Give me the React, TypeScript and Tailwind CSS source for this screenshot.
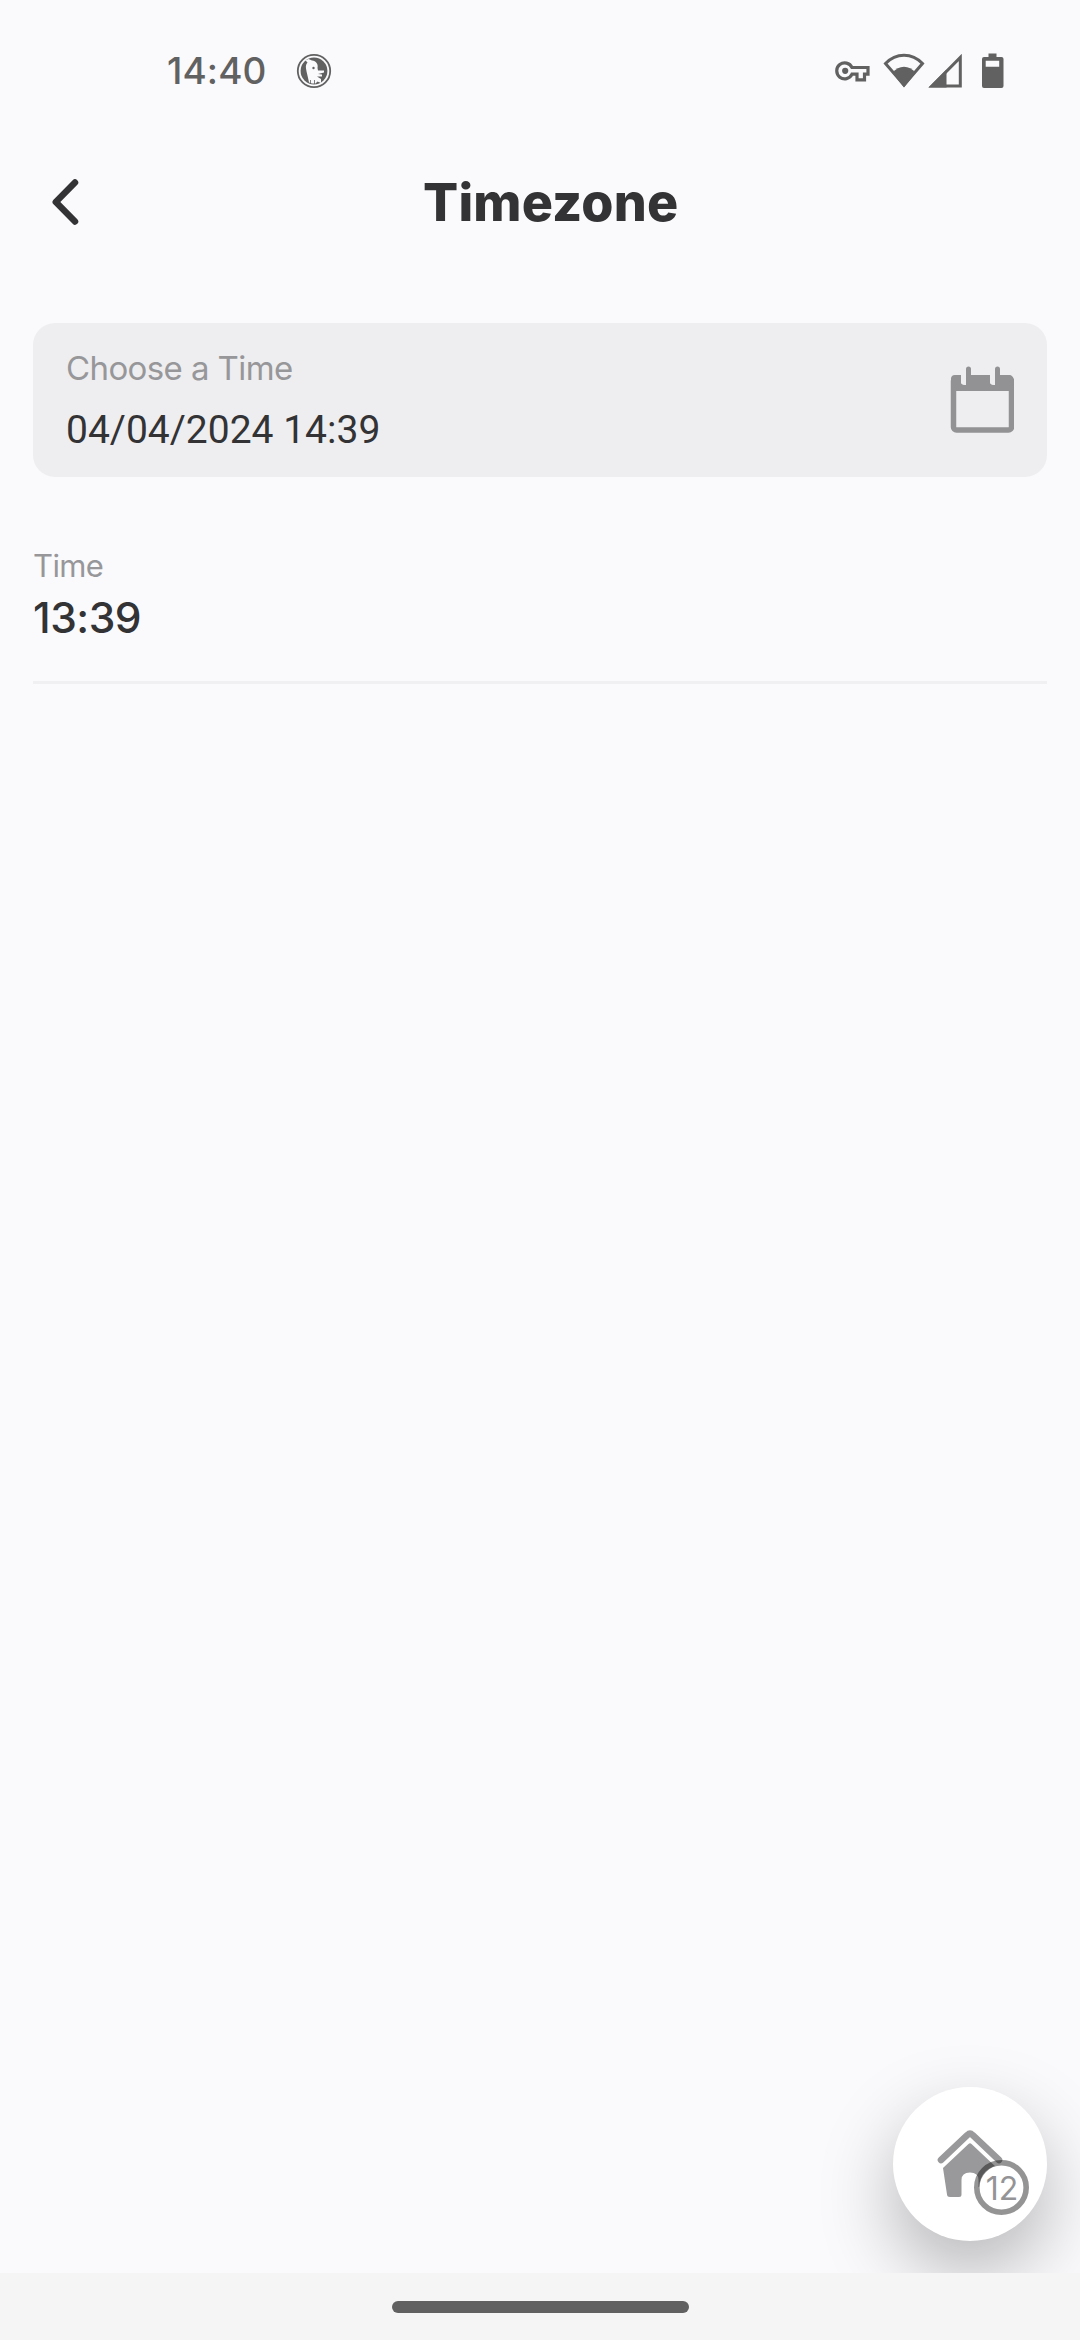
import React from 'react';

const StatusBar: React.FC = () => (
  <div className="flex h-[142px] shrink-0 items-center pl-[167px] text-[#616161]">
    <span className="w-[129px] pb-[2px] text-[37px] font-medium leading-none tracking-[0.1px]">14:40</span>

    {/* DuckDuckGo */}
    <svg className="h-[36px] w-[36px]" viewBox="0 0 36 36" fill="none">
      <circle cx="18" cy="18" r="16.2" stroke="#616161" strokeWidth="1.8" />
      <circle cx="18" cy="18" r="13.4" fill="#616161" />
      <path
        d="M9.5 7.5L12.500 6L16 7.500C20 8 22.500 11 21.500 15L22 17.500L28 17.500V19.500L22 21L26 21.500V23.500L21 23.500L25 26V30L21.500 28.500L19.500 30.500H16L13 29.500C12 24 10.500 19 10 15.500C9.500 12.500 10.500 10.500 11.500 9.500z"
        fill="#fafafd"
      />
      <circle cx="17.500" cy="15" r="1.200" fill="#616161" />
      <path d="M14.500 27V31M18.500 27V31" stroke="#616161" strokeWidth="0.8" />
    </svg>

    <div className="ml-auto flex h-[36px] pr-[76px]">
      {/* VPN key */}
      <svg className="h-[36px] w-[36px]" viewBox="0 0 36 36" fill="none" stroke="#616161" strokeWidth="3.2">
        <path d="M17 14.500a8 8 0 1 0 0 6.700h5v5.600h7.500v-5.600H33v-6.700z" />
        <circle cx="10.200" cy="17.800" r="3.100" fill="#616161" stroke="none" />
      </svg>
      {/* Wifi */}
      <svg className="ml-[12px] h-[36px] w-[42px]" viewBox="0 0 42 36" fill="none">
        <path d="M2.500 10.500C13 -.6 29 -.6 39.500 10.500L21 32z" stroke="#616161" strokeWidth="3" />
        <path d="M9.500 20c6-8.400 17-8.400 23 0L21 34.500z" fill="#616161" />
      </svg>
      {/* Signal */}
      <svg className="ml-[3px] h-[36px] w-[35px]" viewBox="0 0 35 36" fill="none">
        <path d="M4 33L32.300 4.500V33z" stroke="#616161" strokeWidth="3" />
        <path d="M.5 34.600L18.500 16.500v18z" fill="#616161" />
      </svg>
      {/* Battery */}
      <svg className="ml-[18px] h-[36px] w-[23px]" viewBox="0 0 23 36">
        <path
          fillRule="evenodd"
          fill="#616161"
          d="M7.500 0.500h8v3.500h5a2 2 0 0 1 2 2v27a2 2 0 0 1-2 2h-17.500a2 2 0 0 1-2-2v-27a2 2 0 0 1 2-2h4.500zM4.700 7.700v6h13.500v-6z"
        />
      </svg>
    </div>
  </div>
);

const Header: React.FC = () => (
  <header className="flex h-[122px] shrink-0 items-center">
    <svg className="ml-[48px] h-[48px] w-[34px]" viewBox="0 0 34 48" fill="none">
      <path
        d="M27 3.500L7.800 23L27 42.500"
        stroke="#333335"
        strokeWidth="6.5"
        strokeLinecap="round"
        strokeLinejoin="round"
      />
    </svg>
    <h1 className="ml-[341px] text-[52px] font-extrabold leading-none tracking-[0.2px] text-[#333335]">Timezone</h1>
  </header>
);

const CalendarIcon: React.FC = () => (
  <svg className="h-[68px] w-[64px]" viewBox="0 0 64 68" fill="none">
    <rect x="3.500" y="12" width="58" height="52" rx="3" stroke="#929294" strokeWidth="5.5" />
    <path
      d="M1 25V13a4 4 0 0 1 4-4h6v6a4 4 0 0 0 4 4h1V3a2.500 2.500 0 0 1 5 0v6h19v6a4 4 0 0 0 4 4h1V3a2.500 2.500 0 0 1 5 0v6h9a4 4 0 0 1 4 4v12z"
      fill="#929294"
    />
    <path d="M11 6v10a2.500 2.500 0 0 0 5 0V6zM40 6v10a2.500 2.500 0 0 0 5 0V6z" fill="#eeeef0" />
  </svg>
);

const HomeButton: React.FC = () => (
  <button className="absolute bottom-[32px] right-[33px] h-[154px] w-[154px] rounded-full bg-white shadow-[0_31px_74px_rgba(0,0,0,0.28)]">
    <svg className="h-[154px] w-[154px]" viewBox="0 0 154 154" fill="none">
      <path d="M48 73L74.500 48Q77 45.500 79.500 48L106 73" stroke="#99999b" strokeWidth="6.6" strokeLinecap="round" />
      <path
        d="M75.500 57Q77 55.500 78.500 57L104 81L102 100H85.500V93Q85.500 85.500 77 85.500Q68.500 85.500 68.500 93V107.500Q68.500 110 66 110H57Q54.200 110 54 107.500L50 81z"
        fill="#99999b"
      />
      {/* Counter badge */}
      <circle cx="108.500" cy="100.500" r="22.500" fill="#ffffff" />
      <circle cx="108.500" cy="100.500" r="24.700" stroke="#000000" strokeOpacity="0.42" strokeWidth="5.6" />
      <text x="109" y="112.500" textAnchor="middle" fontSize="32" fill="#949496">12</text>
    </svg>
  </button>
);

const App: React.FC = () => {
  return (
    <div className="flex h-[2340px] w-[1080px] flex-col overflow-hidden bg-[#fafafd] font-['Inter',sans-serif]">
      <div className="relative flex flex-1 flex-col overflow-hidden">
        <StatusBar />
        <Header />

        <main className="flex flex-col px-[33px] pt-[59px]">
          {/* Date picker */}
          <div className="flex h-[154px] items-center justify-between rounded-[22px] bg-[#eeeef0] px-[33px]">
            <div className="flex flex-col">
              <span className="h-[60px] text-[33px] leading-[56px] tracking-[-0.6px] text-[#97979a]">
                Choose a Time
              </span>
              <span className="h-[60px] font-['Roboto',sans-serif] text-[39px] leading-[60px] text-[#333335]">
                04/04/2024 14:39
              </span>
            </div>
            <CalendarIcon />
          </div>

          {/* Result */}
          <div className="flex h-[207px] flex-col border-b-[3px] border-[#f0f0f2] pt-[68px]">
            <span className="text-[31px] leading-[42px] tracking-[-0.6px] text-[#97979a]">Time</span>
            <span className="text-[42.5px] font-[450] leading-[61px] tracking-[-0.5px] text-[#333335]">13:39</span>
          </div>
        </main>

        <HomeButton />
      </div>

      {/* Gesture bar */}
      <div className="flex h-[67px] shrink-0 items-center justify-center bg-[#f5f5f5]">
        <div className="h-[12px] w-[297px] rounded-full bg-[#616161]" />
      </div>
    </div>
  );
};

export default App;
